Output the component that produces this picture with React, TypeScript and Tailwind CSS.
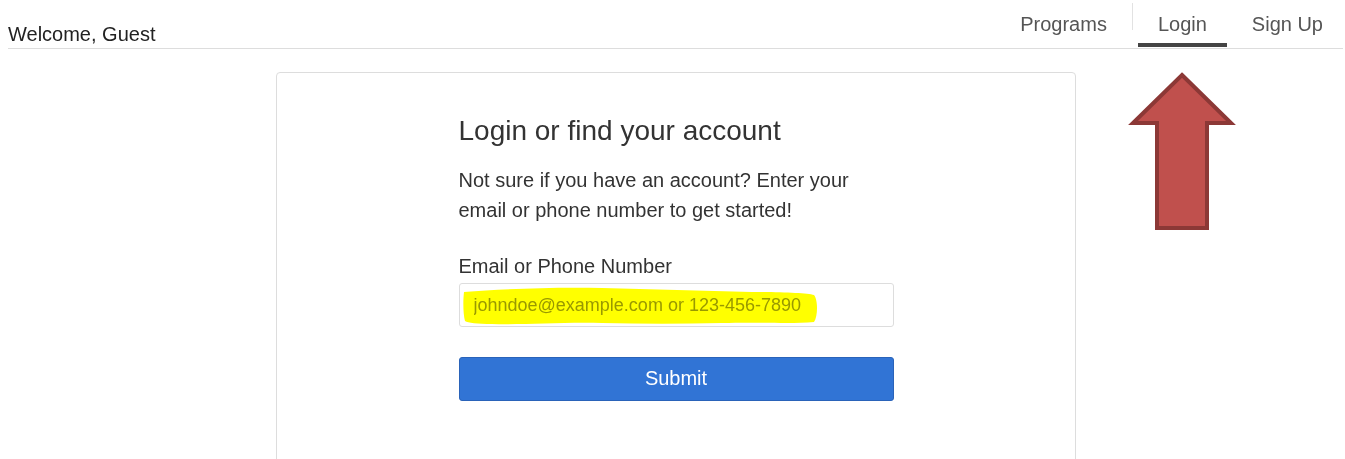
import React from 'react';

const NAV = [
  { label: 'Programs', active: false },
  { label: 'Login', active: true },
  { label: 'Sign Up', active: false },
];

function NavTab({ label, active }: { label: string; active: boolean }) {
  return (
    <a href="#" className="flex flex-col pt-[12px] text-[20px] leading-[24px] text-[#555]">
      <span className="px-5 pb-[7px]">{label}</span>
      <span className={`mb-px h-[4px] ${active ? 'bg-[#444]' : 'bg-transparent'}`} />
    </a>
  );
}

// red callout arrow pointing up at the Login tab
function UpArrow() {
  return (
    <svg
      className="absolute left-[1128px] top-[70px]"
      width="108"
      height="164"
      viewBox="0 0 108 164"
    >
      <polygon
        points="54,5 103,53 79,53 79,158 29,158 29,53 5,53"
        fill="#c0504d"
        stroke="#8c3836"
        strokeWidth="4"
        strokeLinejoin="miter"
      />
    </svg>
  );
}

// highlighter stroke behind the placeholder
function Highlight() {
  return (
    <svg
      className="pointer-events-none absolute left-[3px] top-[3px] mix-blend-multiply"
      width="360"
      height="42"
      viewBox="0 0 360 42"
    >
      <path
        d="M2,6 C40,3 90,1 140,2 C190,3 240,5 290,6 C320,6 345,7 352,9 C356,14 356,30 352,36 C330,38 300,36 260,37 C220,38 180,38 140,37 C100,36 60,39 30,38 C15,38 6,37 3,35 C1,28 1,14 2,6 Z"
        fill="#ffff00"
      />
    </svg>
  );
}

export default function App() {
  return (
    <div className="relative min-h-screen overflow-hidden bg-white font-['Liberation_Sans',Arial,sans-serif] text-[#333]">
      {/* Top bar */}
      <header className="ml-2 mr-[2px] flex h-[49px] items-stretch justify-between border-b border-[#ddd]">
        <span className="self-end pb-[2px] text-[20px] leading-[24px] text-[#222]">Welcome, Guest</span>
        <nav className="flex items-stretch gap-[5px]">
          <NavTab {...NAV[0]} />
          <span className="mt-[3px] h-[27px] w-px bg-[#e2e2e2]" />
          <NavTab {...NAV[1]} />
          <NavTab {...NAV[2]} />
        </nav>
      </header>

      {/* Login card */}
      <div className="ml-[276px] mt-[23px] h-[420px] w-[800px] rounded-[4px] border border-[#ddd] pt-[41px]">
        <div className="mx-auto w-[435px]">
          <h1 className="text-[28px] leading-[34px] text-[#333]">Login or find your account</h1>
          <p className="mt-[17px] text-[20px] leading-[30px] text-[#333]">
            Not sure if you have an account? Enter your email or phone number to get started!
          </p>

          <label className="mt-[29px] block text-[20px] leading-[24px] text-[#333]">Email or Phone Number</label>
          <div className="relative mt-[5px]">
            <input
              type="text"
              placeholder="johndoe@example.com or 123-456-7890"
              className="block h-[44px] w-full rounded-[3px] border border-[#ddd] bg-white pl-[14px] text-[18px] text-[#333] outline-none placeholder:text-[#999]"
            />
            <Highlight />
          </div>

          <button
            type="button"
            className="mt-[30px] flex h-[44px] w-full items-center justify-center rounded-[3px] border border-[#2a63b9] bg-[#3174d5] pb-[3px] text-[20px] leading-[24px] text-white"
          >
            Submit
          </button>
        </div>
      </div>

      <UpArrow />
    </div>
  );
}
